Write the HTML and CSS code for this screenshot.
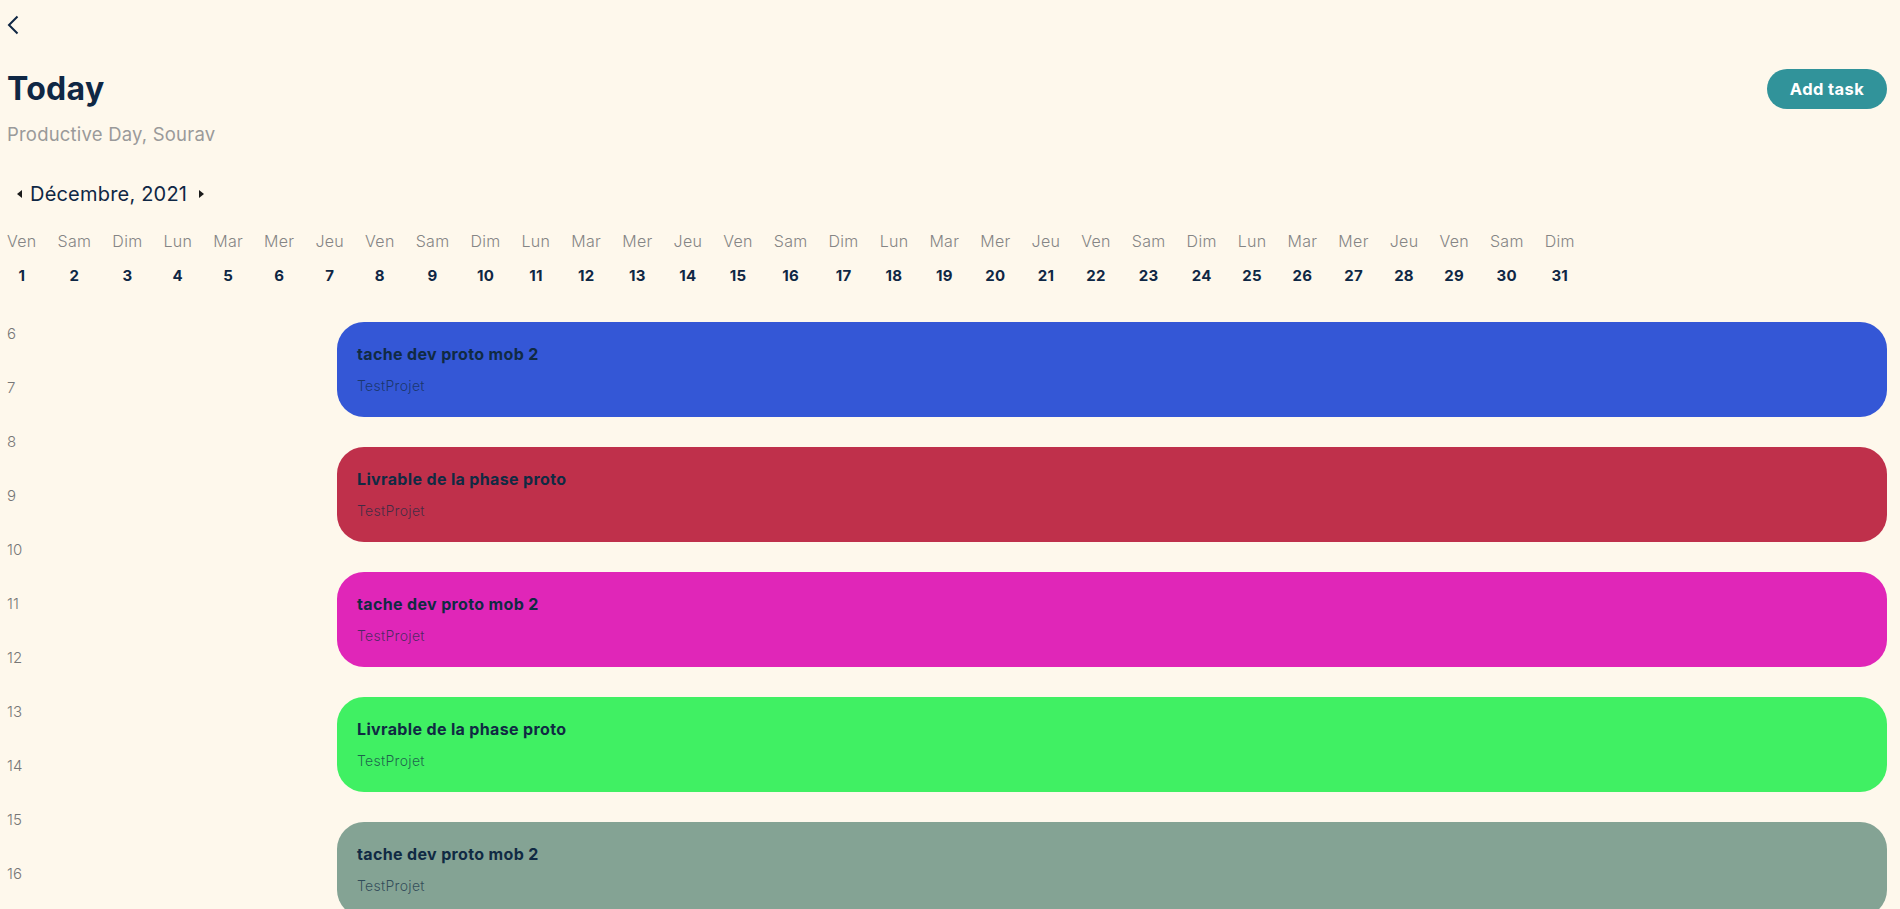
FILE: index.html
```html
<!DOCTYPE html>
<html lang="fr">
<head>
<meta charset="utf-8">
<title>Today</title>
<link rel="stylesheet" href="styles.css">
</head>
<body>
<div class="page">
  <button class="back" aria-label="Retour">
    <svg width="12" height="20" viewBox="0 0 12 20"><path d="M10.5 1.5 L2 10 L10.5 18.5" fill="none" stroke="#0f2744" stroke-width="2"/></svg>
  </button>

  <header class="head">
    <div class="titles">
      <h1 class="title">Today</h1>
      <p class="sub">Productive Day, Sourav</p>
    </div>
    <button class="add">Add task</button>
  </header>

  <div class="month">
    <span class="tri tri-l"></span>
    <span class="month-label">Décembre, 2021</span>
    <span class="tri tri-r"></span>
  </div>

  <div class="days">
    <div class="day"><span class="dn">Ven</span><span class="dd">1</span></div>
    <div class="day"><span class="dn">Sam</span><span class="dd">2</span></div>
    <div class="day"><span class="dn">Dim</span><span class="dd">3</span></div>
    <div class="day"><span class="dn">Lun</span><span class="dd">4</span></div>
    <div class="day"><span class="dn">Mar</span><span class="dd">5</span></div>
    <div class="day"><span class="dn">Mer</span><span class="dd">6</span></div>
    <div class="day"><span class="dn">Jeu</span><span class="dd">7</span></div>
    <div class="day"><span class="dn">Ven</span><span class="dd">8</span></div>
    <div class="day"><span class="dn">Sam</span><span class="dd">9</span></div>
    <div class="day"><span class="dn">Dim</span><span class="dd">10</span></div>
    <div class="day"><span class="dn">Lun</span><span class="dd">11</span></div>
    <div class="day"><span class="dn">Mar</span><span class="dd">12</span></div>
    <div class="day"><span class="dn">Mer</span><span class="dd">13</span></div>
    <div class="day"><span class="dn">Jeu</span><span class="dd">14</span></div>
    <div class="day"><span class="dn">Ven</span><span class="dd">15</span></div>
    <div class="day"><span class="dn">Sam</span><span class="dd">16</span></div>
    <div class="day"><span class="dn">Dim</span><span class="dd">17</span></div>
    <div class="day"><span class="dn">Lun</span><span class="dd">18</span></div>
    <div class="day"><span class="dn">Mar</span><span class="dd">19</span></div>
    <div class="day"><span class="dn">Mer</span><span class="dd">20</span></div>
    <div class="day"><span class="dn">Jeu</span><span class="dd">21</span></div>
    <div class="day"><span class="dn">Ven</span><span class="dd">22</span></div>
    <div class="day"><span class="dn">Sam</span><span class="dd">23</span></div>
    <div class="day"><span class="dn">Dim</span><span class="dd">24</span></div>
    <div class="day"><span class="dn">Lun</span><span class="dd">25</span></div>
    <div class="day"><span class="dn">Mar</span><span class="dd">26</span></div>
    <div class="day"><span class="dn">Mer</span><span class="dd">27</span></div>
    <div class="day"><span class="dn">Jeu</span><span class="dd">28</span></div>
    <div class="day"><span class="dn">Ven</span><span class="dd">29</span></div>
    <div class="day"><span class="dn">Sam</span><span class="dd">30</span></div>
    <div class="day"><span class="dn">Dim</span><span class="dd">31</span></div>
  </div>

  <div class="timeline">
    <ul class="hours">
      <li>6</li><li>7</li><li>8</li><li>9</li><li>10</li><li>11</li>
      <li>12</li><li>13</li><li>14</li><li>15</li><li>16</li>
    </ul>
    <div class="tasks">
      <div class="task task-blue"><div class="task-title">tache dev proto mob 2</div><div class="task-proj">TestProjet</div></div>
      <div class="task task-red"><div class="task-title">Livrable de la phase proto</div><div class="task-proj">TestProjet</div></div>
      <div class="task task-pink"><div class="task-title">tache dev proto mob 2</div><div class="task-proj">TestProjet</div></div>
      <div class="task task-green"><div class="task-title">Livrable de la phase proto</div><div class="task-proj">TestProjet</div></div>
      <div class="task task-sage"><div class="task-title">tache dev proto mob 2</div><div class="task-proj">TestProjet</div></div>
    </div>
  </div>
</div>
</body>
</html>
```

FILE: styles.css
```css
* { box-sizing: border-box; }

html, body {
  margin: 0;
  padding: 0;
  background: #fef8ec;
  height: 100%;
  overflow: hidden;
}

body {
  font-family: Inter, "Open Sans", sans-serif;
  color: #0f2744;
}

.page {
  padding: 0 13px 0 7px;
}

.back {
  display: block;
  margin: 15px 0 0 0;
  padding: 0;
  border: 0;
  background: none;
  width: 12px;
  height: 20px;
  cursor: pointer;
}
.back svg { display: block; }

.head {
  margin-top: 34px;
  display: flex;
  justify-content: space-between;
  align-items: flex-start;
}

.title {
  margin: 0;
  font-size: 32px;
  line-height: 40px;
  font-weight: 700;
  letter-spacing: 0.3px;
  color: #0f2744;
}

.sub {
  margin: 13px 0 0 0;
  font-size: 18.5px;
  line-height: 24px;
  font-weight: 400;
  letter-spacing: 0.2px;
  color: #9a9a9a;
}

.add {
  width: 120px;
  height: 40px;
  border: 0;
  border-radius: 20px;
  background: #31939a;
  color: #fff;
  font-family: Inter, "Open Sans", sans-serif;
  font-size: 16.5px;
  font-weight: 700;
  letter-spacing: 0.4px;
  cursor: pointer;
}

.month {
  margin-top: 36px;
  display: flex;
  align-items: center;
  gap: 8px;
  padding-left: 10px;
  height: 24px;
}

.month-label {
  font-size: 20px;
  line-height: 24px;
  letter-spacing: 0.2px;
  color: #0f2744;
}

.tri {
  width: 0;
  height: 0;
  border-top: 4.5px solid transparent;
  border-bottom: 4.5px solid transparent;
}
.tri-l { border-right: 5px solid #1b1b1b; }
.tri-r { border-left: 5px solid #1b1b1b; margin-left: 4px; }

.days {
  margin-top: 25px;
  display: flex;
  gap: 21px;
}

.day {
  display: flex;
  flex-direction: column;
  align-items: center;
}

.dn {
  font-size: 16px;
  line-height: 20px;
  font-weight: 300;
  letter-spacing: 0.3px;
  color: #858585;
}

.dd {
  margin-top: 15px;
  font-size: 15px;
  line-height: 20px;
  font-weight: 700;
  letter-spacing: 0.3px;
  color: #0f2744;
}

.timeline {
  margin-top: 21px;
  display: flex;
}

.hours {
  list-style: none;
  margin: 0;
  padding: 0;
  width: 330px;
  flex: none;
}

.hours li {
  height: 54px;
  line-height: 54px;
  font-size: 15px;
  font-weight: 300;
  color: #777;
}

.tasks {
  flex: 1;
  margin-top: 15px;
  display: flex;
  flex-direction: column;
  gap: 30px;
}

.task {
  height: 95px;
  border-radius: 27px;
  padding: 22px 20px 0 20px;
}

.task-title {
  font-size: 16px;
  line-height: 20px;
  font-weight: 700;
  letter-spacing: 0.35px;
  color: #102a43;
}

.task-proj {
  margin-top: 13px;
  font-size: 14px;
  line-height: 18px;
  font-weight: 300;
  letter-spacing: 0.3px;
  color: rgba(16, 42, 67, 0.72);
}

.task-blue  { background: #3457d6; }
.task-red   { background: #bf304b; }
.task-pink  { background: #e026b8; }
.task-green { background: #40f063; }
.task-sage  { background: #84a394; }
```
